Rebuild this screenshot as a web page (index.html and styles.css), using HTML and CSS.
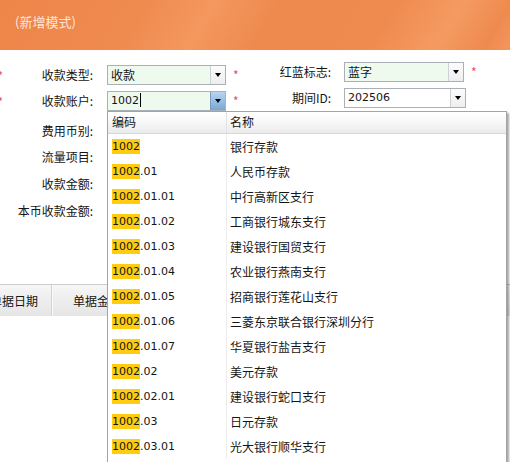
FILE: index.html
```html
<!DOCTYPE html>
<html lang="zh-CN">
<head>
<meta charset="utf-8">
<title>收款单</title>
<link rel="stylesheet" href="styles.css">
</head>
<body>
<div class="banner"><span class="mode">(新增模式)</span></div>
<div class="form">
  <div class="col col-left">
    <div class="row r1">
      <span class="req-l">*</span><span class="label">收款类型:</span>
      <div class="combo req-bg"><span class="val">收款</span><span class="btn"><i class="tri"></i></span></div>
      <span class="req">*</span>
    </div>
    <div class="row r2">
      <span class="req-l">*</span><span class="label">收款账户:</span>
      <div class="combo req-bg open">
        <span class="val num">1002<span class="caret"></span></span><span class="btn active"><i class="tri"></i></span>
        <div class="dropdown">
          <div class="dd-head"><span class="c-code">编码</span><span class="c-name">名称</span></div>
          <div class="dd-row"><span class="c-code num"><span class="hl">1002</span></span><span class="c-name">银行存款</span></div>
          <div class="dd-row"><span class="c-code num"><span class="hl">1002</span>.01</span><span class="c-name">人民币存款</span></div>
          <div class="dd-row"><span class="c-code num"><span class="hl">1002</span>.01.01</span><span class="c-name">中行高新区支行</span></div>
          <div class="dd-row"><span class="c-code num"><span class="hl">1002</span>.01.02</span><span class="c-name">工商银行城东支行</span></div>
          <div class="dd-row"><span class="c-code num"><span class="hl">1002</span>.01.03</span><span class="c-name">建设银行国贸支行</span></div>
          <div class="dd-row"><span class="c-code num"><span class="hl">1002</span>.01.04</span><span class="c-name">农业银行燕南支行</span></div>
          <div class="dd-row"><span class="c-code num"><span class="hl">1002</span>.01.05</span><span class="c-name">招商银行莲花山支行</span></div>
          <div class="dd-row"><span class="c-code num"><span class="hl">1002</span>.01.06</span><span class="c-name">三菱东京联合银行深圳分行</span></div>
          <div class="dd-row"><span class="c-code num"><span class="hl">1002</span>.01.07</span><span class="c-name">华夏银行盐吉支行</span></div>
          <div class="dd-row"><span class="c-code num"><span class="hl">1002</span>.02</span><span class="c-name">美元存款</span></div>
          <div class="dd-row"><span class="c-code num"><span class="hl">1002</span>.02.01</span><span class="c-name">建设银行蛇口支行</span></div>
          <div class="dd-row"><span class="c-code num"><span class="hl">1002</span>.03</span><span class="c-name">日元存款</span></div>
          <div class="dd-row"><span class="c-code num"><span class="hl">1002</span>.03.01</span><span class="c-name">光大银行顺华支行</span></div>
        </div>
      </div>
      <span class="req">*</span>
    </div>
    <div class="row r3"><span class="req-l"></span><span class="label">费用币别:</span></div>
    <div class="row r4"><span class="req-l"></span><span class="label">流量项目:</span></div>
    <div class="row r5"><span class="req-l"></span><span class="label">收款金额:</span></div>
    <div class="row r6"><span class="req-l"></span><span class="label">本币收款金额:</span></div>
  </div>
  <div class="col col-right">
    <div class="row rr1">
      <span class="label">红蓝标志:</span>
      <div class="combo req-bg"><span class="val">蓝字</span><span class="btn"><i class="tri"></i></span></div>
      <span class="req">*</span>
    </div>
    <div class="row rr2">
      <span class="label">期间ID:</span>
      <div class="combo wide"><span class="val num">202506</span><span class="btn"><i class="tri"></i></span></div>
    </div>
  </div>
</div>
<div class="grid-head">
  <div class="gh-cell gh-date">单据日期</div>
  <div class="gh-cell gh-amount">单据金额</div>
</div>
</body>
</html>
```
FILE: styles.css
```css
* { box-sizing: border-box; }
html, body { margin: 0; padding: 0; }
body {
  width: 510px;
  height: 462px;
  overflow: hidden;
  background: #fff;
  color: #151515;
  font-family: "Noto Sans CJK SC", "Noto Sans", sans-serif;
  font-size: 12px;
}
.num { font-family: "DejaVu Sans", "Noto Sans CJK SC", sans-serif; font-size: 11px; }

.banner {
  height: 50px;
  padding: 13px 0 0 15px;
  background: linear-gradient(121deg, #ee8549 0%, #f08b50 28%, #f3985f 40%, #ef8a4e 52%, #f08b4f 74%, #f49b63 86%, #ef8a4e 95%, #f3975f 100%);
}
.mode { color: #fde6d7; font-size: 13px; line-height: 18px; }

.form { display: flex; }
.col-left { width: 250px; flex: none; }
.col-right { flex: 1; }
.row { display: flex; align-items: center; height: 26px; }
.r1 { margin-top: 12px; }
.r3 { margin-top: 4px; }
.r5, .r6 { margin-top: 1px; }
.rr1 { margin-top: 9px; }

.req-l { width: 8px; margin-left: -5px; text-align: right; color: #ee4a5a; flex: none; }
.col-left .label { width: 90px; text-align: right; flex: none; line-height: 18px; }
.col-right .label { width: 81px; text-align: right; flex: none; line-height: 18px; }
.req { color: #ee4a5a; margin-left: 7px; margin-top: -2px; }

.combo {
  position: relative;
  display: flex;
  flex: none;
  width: 119px;
  height: 20px;
  margin-left: 14px;
  border: 1px solid #a9b0b8;
  background: #fff;
}
.col-right .combo { width: 120px; margin-left: 13px; }
.col-right .combo.wide { width: 122px; }
.combo.req-bg { background: #eefaee; }
.val { flex: 1; padding-left: 3px; line-height: 18px; white-space: nowrap; }
.caret { display: inline-block; width: 1px; height: 14px; background: #000; vertical-align: -3px; margin-left: 1px; }
.btn {
  width: 15px;
  flex: none;
  display: flex;
  align-items: center;
  justify-content: center;
  border-left: 1px solid #cdd2d8;
  background: linear-gradient(#fcfcfc, #eeeeee);
}
.btn.active { background: linear-gradient(#b9d4ee, #79a8d6); border-left-color: #7b9cc0; }
.tri { width: 0; height: 0; border-left: 3.5px solid transparent; border-right: 3.5px solid transparent; border-top: 4px solid #000; }

.dropdown {
  position: absolute;
  left: -1px;
  top: calc(100% + 1px);
  z-index: 10;
  width: 400px;
  padding-bottom: 20px;
  background: #fff;
  border: 1px solid #a4a4a4;
  box-shadow: 2px 2px 2px rgba(0, 0, 0, 0.35);
}
.dd-head {
  display: flex;
  height: 22px;
  line-height: 20px;
  border-bottom: 1px solid #d8d8d8;
  background: linear-gradient(#ffffff 0%, #f8f8f8 45%, #ebebeb 100%);
}
.dd-row { display: flex; height: 25px; line-height: 25px; }
.c-code { width: 119px; flex: none; padding-left: 4px; border-right: 1px solid #ededed; white-space: nowrap; }
.dd-head .c-code { border-right-color: #e2e2e2; }
.c-name { padding-left: 3px; white-space: nowrap; }
.hl { background: #ffcc10; padding: 1px 0; }

.grid-head {
  display: flex;
  margin-top: 60px;
  margin-left: -23px;
  height: 32px;
  border-top: 1px solid #cdcdcd;
  background: linear-gradient(#f6f6f6, #e5e5e5);
}
.gh-cell { line-height: 31px; text-align: center; flex: none; }
.gh-date { width: 75px; border-right: 1px solid #d2d2d2; box-shadow: 1px 0 0 #fafafa; }
.gh-amount { width: 90px; }
```
